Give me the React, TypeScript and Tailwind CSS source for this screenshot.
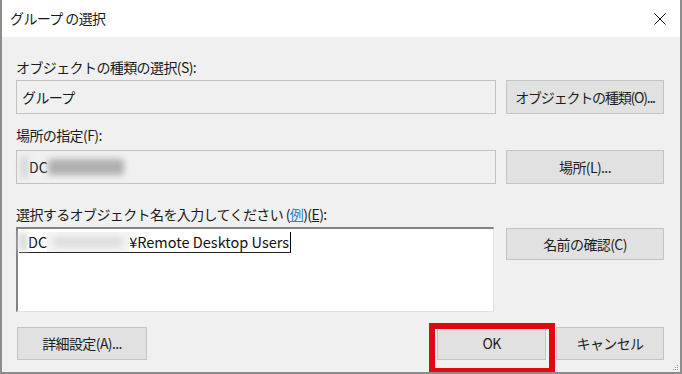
import React from 'react'

const font = { fontFamily: '"Noto Sans CJK JP", "Noto Sans", sans-serif' }

function Btn({ children, className = '' }: { children: React.ReactNode; className?: string }) {
  return (
    <div
      className={`shrink-0 whitespace-nowrap flex items-center justify-center bg-[#e1e1e1] border border-[#c4c4c4] text-[14px] text-[#1e1e1e] ${className}`}
    >
      {children}
    </div>
  )
}

function Redacted({ className = '' }: { className?: string }) {
  return <div className={`shrink-0 rounded-sm blur-[3px] ${className}`} />
}

export default function App() {
  return (
    <div
      className="relative w-[682px] h-[374px] bg-[#f0f0f0] border-2 border-t-0 border-[#8c8c8c] overflow-hidden select-none"
      style={font}
    >
      {/* title bar */}
      <div className="h-[37px] bg-white flex items-center justify-between pl-[8px] pr-[12px]">
        <span className="text-[14px] text-[#1a1a1a] tracking-[-0.6px]">グループ の選択</span>
        <svg width="12" height="12" viewBox="0 0 12 12" className="mr-[2px]">
          <path d="M0.5 0.5 L11.5 11.5 M11.5 0.5 L0.5 11.5" stroke="#111" strokeWidth="1" />
        </svg>
      </div>

      <div className="px-[14px] flex flex-col text-[14px] tracking-[-0.6px] text-[#1a1a1a]">
        {/* object type */}
        <div className="mt-[20px] h-5 flex items-center">オブジェクトの種類の選択(S):</div>
        <div className="mt-[3px] flex gap-[10px] h-[34px]">
          <div className="w-[480px] shrink-0 border border-[#c2c2c2] bg-[#f0f0f0] flex items-center pl-[5px]">
            グループ
          </div>
          <Btn className="w-[158px] tracking-[-1.2px]">オブジェクトの種類(O)...</Btn>
        </div>

        {/* location */}
        <div className="mt-[11px] h-5 flex items-center">場所の指定(F):</div>
        <div className="mt-[5px] flex gap-[10px] h-[34px]">
          <div className="w-[480px] shrink-0 border border-[#c2c2c2] bg-[#f0f0f0] flex items-center pl-[4px] tracking-normal">
            <Redacted className="w-[7px] h-[22px] bg-[#d4d4d4]" />
            <span className="ml-[1px]">DC</span>
            <Redacted className="w-[76px] h-[16px] bg-[#b0b0b0]" />
          </div>
          <Btn className="w-[158px] tracking-[-0.6px]">場所(L)...</Btn>
        </div>

        {/* object names */}
        <div className="mt-[20px] h-5 flex items-center">
          選択するオブジェクト名を入力してください (<span className="text-[#2f7fd0] underline">例</span>)(<span className="underline">E</span>):
        </div>
        <div className="mt-[3px] flex gap-[12px] h-[85px]">
          <div className="w-[478px] shrink-0 bg-white border-t-2 border-l-2 border-r border-b border-t-[#838383] border-l-[#838383] border-r-[#e2e2e2] border-b-[#e2e2e2] pl-[1px] pt-[3px] tracking-normal">
            <div className="inline-flex items-center h-[21px] border-b border-[#222] text-[14.5px] text-[#111] leading-none">
              <Redacted className="w-[8px] h-[20px] bg-[#d6d6d6]" />
              <span className="ml-[1px]">DC</span>
              <div className="w-[82px] h-[20px] bg-[#f4f4f4] flex items-center justify-center">
                <Redacted className="w-[70px] h-[10px] bg-[#dcdcdc]" />
              </div>
              <span>¥Remote Desktop Users</span>
              <span className="w-px h-[20px] bg-black ml-px" />
            </div>
          </div>
          <Btn className="w-[158px] h-[32px] mt-px tracking-[-0.6px]">名前の確認(C)</Btn>
        </div>

        {/* bottom buttons */}
        <div className="mt-[15px] flex h-[33px]">
          <Btn className="w-[130px] ml-[1px] tracking-[-0.6px]">詳細設定(A)...</Btn>
          <div className="flex-1" />
          <Btn className="w-[109px]">OK</Btn>
          <Btn className="w-[108px] ml-[10px] tracking-[-0.6px]">キャンセル</Btn>
          <div className="w-[2px]" />
        </div>
      </div>

      {/* resize grip */}
      <svg width="8" height="8" viewBox="0 0 8 8" className="absolute right-[1px] bottom-[1px]">
        <rect x="6" y="2" width="1" height="1" fill="#9a9a9a" />
        <rect x="4" y="4" width="1" height="1" fill="#9a9a9a" />
        <rect x="6" y="4" width="1" height="1" fill="#9a9a9a" />
        <rect x="2" y="6" width="1" height="1" fill="#9a9a9a" />
        <rect x="4" y="6" width="1" height="1" fill="#9a9a9a" />
        <rect x="6" y="6" width="1" height="1" fill="#9a9a9a" />
      </svg>

      {/* red highlight annotation */}
      <div className="absolute left-[427px] top-[323px] w-[126px] h-[51px] border-[6px] border-[#e30613]" />
    </div>
  )
}
